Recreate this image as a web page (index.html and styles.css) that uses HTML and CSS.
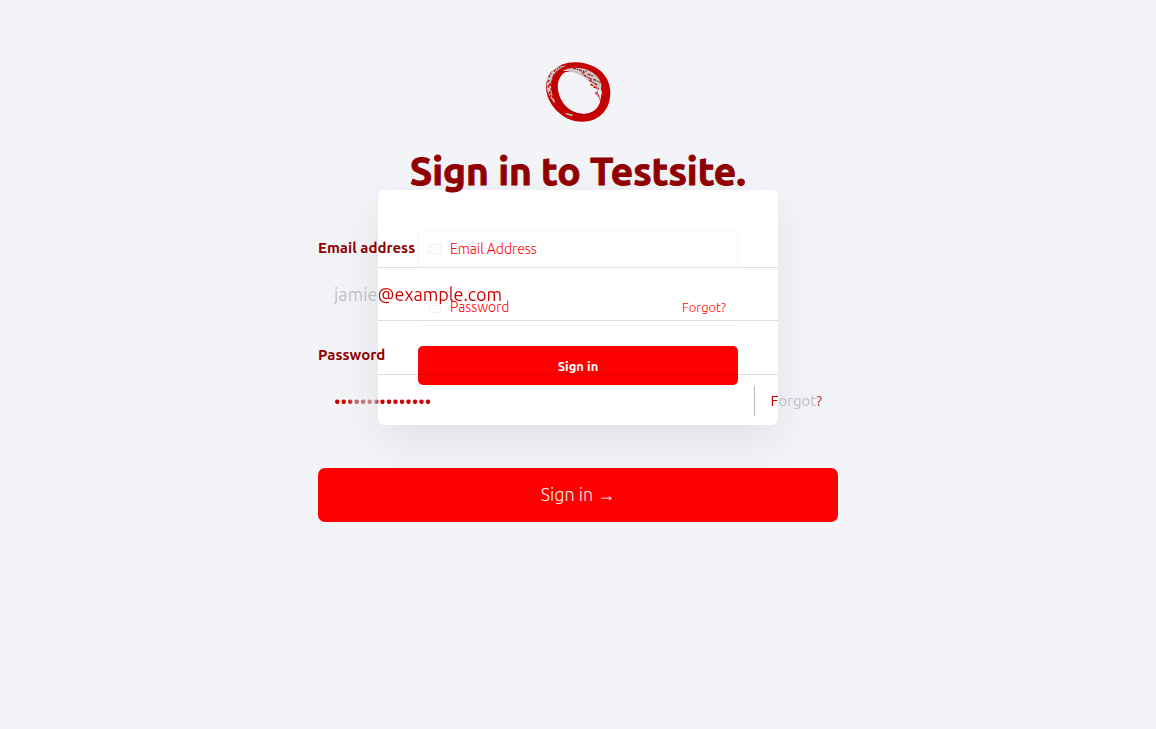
FILE: index.html
```html
<!DOCTYPE html>
<html lang="en">
<head>
<meta charset="utf-8">
<meta name="viewport" content="width=device-width, initial-scale=1">
<title>Sign in to Testsite.</title>
<link rel="stylesheet" href="styles.css">
</head>
<body>
<main class="stage">
  <form class="card">
    <div class="card-field">
      <svg class="card-icon" viewBox="0 0 14 12" aria-hidden="true"><path d="M.5 1.5h13v9H.5zM1 2l6 5 6-5M1 10l4-4M13 10L9 6"/></svg>
      <input class="card-input" type="email" placeholder="Email Address" aria-label="Email Address">
    </div>
    <div class="card-field card-field-secret">
      <svg class="card-icon" viewBox="0 0 14 12" aria-hidden="true"><path d="M1.5 4.500h11v7h-11zM4 4.500V1h6v3.500M5 7.500h4"/></svg>
      <input class="card-input" type="password" placeholder="Password" aria-label="Card password">
      <a class="card-forgot" href="#">Forgot?</a>
    </div>
    <button class="card-submit" type="button">Sign in</button>
  </form>

  <div class="panel">
    <svg class="logo" viewBox="24 24 196 180" role="img" aria-label="Testsite">
      <path class="ring" fill-rule="evenodd" d="M76 31C104 20 145 23 174 40C207 59 223 92 218 129C214 174 178 204 133 203C88 203 51 172 34 135C18 97 24 55 76 31ZM76 60C54 81 59 119 76 145C94 172 131 187 158 176C180 168 191 148 190 126C188 96 158 73 132 61C112 51 88 49 76 60Z"/>
      <path class="ash" d="M75 51C98 38 130 39 156 50C184 64 197 86 191 104L188 133C182 108 163 91 143 73C121 57 99 50 75 51Z"/>
      <path class="ash" d="M64 38C32 50 22 82 31 114C38 132 47 144 54 147C41 117 38 89 49 64C54 53 70 43 87 34Z"/>
      <path class="ash" d="M85 176L107 182L104 187L86 181Z"/>
      <path class="ash pale" d="M187 98L194 115L188 137L181 118Z"/>
      <path class="speck" d="M34 70L44 52M29 84L38 77M31 101L43 82M39 112L34 120M42 101L39 132M49 52L69 39M61 51L51 68M46 124L44 138M35 92L45 95"/>
      <path class="speck" d="M107 42L142 53M134 59L149 49M139 63L163 76M151 60L169 67M156 78L181 94M168 76L190 85M169 99L188 105M174 115L184 127M159 91L177 101"/>
      <path class="edge" d="M59 68C47 99 56 139 83 162C108 181 149 190 176 168M49 60C34 98 49 143 79 165M179 112L190 143"/>
    </svg>
    <h1 class="title">Sign in to Testsite.</h1>
    <form class="form">
      <div class="field">
        <label class="label" for="email">Email address</label>
        <div class="control control-email">
          <input class="input input-email" id="email" type="email" value="jamie@example.com">
        </div>
      </div>
      <div class="field">
        <label class="label" for="password">Password</label>
        <div class="control control-password">
          <input class="input input-password" id="password" type="password" value="fifteen-letters">
          <a class="forgot" href="#">Forgot?</a>
        </div>
      </div>
      <button class="submit" type="button">Sign in →</button>
    </form>
  </div>
</main>
</body>
</html>
```
FILE: styles.css
```css
* { box-sizing: border-box; }
body {
  margin: 0;
  min-height: 100vh;
  background: #f2f4f8;
  font-family: Ubuntu, "Noto Sans", sans-serif;
}
input, button { font: inherit; }
a { text-decoration: none; }

.stage {
  display: grid;
  justify-items: center;
  align-items: start;
}
.card, .panel { grid-area: 1 / 1; }

.card {
  display: flex;
  flex-direction: column;
  gap: 20px;
  width: 100%;
  max-width: 400px;
  margin-top: 190px;
  padding: 40px;
  background: #fff;
  border-radius: 6px;
  box-shadow: 0 16px 48px rgba(0, 0, 0, .08);
}
.card-field {
  display: flex;
  align-items: center;
  gap: 8px;
  height: 38px;
  padding: 0 11px 0 9px;
  border: 1px solid #f3f5f7;
  border-bottom-color: #dde5ed;
  border-radius: 5px;
}
.card-field-secret {
  border-color: transparent;
  border-bottom-color: #f0f3f6;
}
.card-icon {
  flex: none;
  width: 14px;
  height: 12px;
  fill: none;
  stroke: #f1f3f5;
}
.card-input {
  flex: 1;
  min-width: 0;
  padding: 0;
  border: 0;
  outline: 0;
  background: none;
  font-size: 14px;
  font-weight: 300;
  color: #f00;
}
.card-input::placeholder { color: #f00; opacity: 1; }
.card-forgot { font-size: 13px; font-weight: 300; color: #f00; }
.card-submit {
  height: 39px;
  border: 0;
  border-radius: 5px;
  background: #f00;
  color: #fff;
  font-size: 13px;
  font-weight: 700;
}

.panel {
  z-index: 1;
  display: flex;
  flex-direction: column;
  align-items: center;
  width: 100%;
  max-width: 520px;
  padding-top: 62px;
}
.logo { width: 66px; height: 60px; }
.ring { fill: #c40000; }
.ash { fill: #c8c8c8; }
.pale { fill: #eceef0; }
.speck {
  fill: none;
  stroke: #d00000;
  stroke-width: 4;
  stroke-dasharray: 9 3 4 3;
}
.edge { fill: none; stroke: #a80000; stroke-width: 2; }
.title {
  margin: 26px 0 43px;
  font-size: 39px;
  line-height: 46px;
  font-weight: 700;
  color: #900000;
  -webkit-text-stroke: 1px #900000;
  white-space: nowrap;
}
.form {
  display: flex;
  flex-direction: column;
  gap: 23px;
  width: 100%;
}
.field { display: flex; flex-direction: column; gap: 8px; }
.label {
  align-self: flex-start;
  font-size: 15px;
  line-height: 22px;
  font-weight: 700;
  color: #900000;
}
.control {
  display: flex;
  align-items: center;
  height: 54px;
  padding: 0 16px;
  background-repeat: no-repeat;
}
.control-email {
  background-image:
    linear-gradient(90deg, #dedede 40px, #dde5ed 40px, #dde5ed calc(100% - 40px), #dedede calc(100% - 40px)),
    linear-gradient(#dedede, #dedede);
  background-position: center top, center bottom;
  background-size: calc(100% - 120px) 1px;
}
.control-password {
  background-image: linear-gradient(rgba(0, 0, 0, .13), rgba(0, 0, 0, .13));
  background-position: center top;
  background-size: calc(100% - 120px) 1px;
}
.input {
  flex: 1;
  min-width: 0;
  height: 30px;
  padding: 0;
  border: 0;
  outline: 0;
  font-size: 18px;
  color: transparent;
  background: linear-gradient(90deg, #bbb 45px, #c80000 45px);
  -webkit-background-clip: text;
  background-clip: text;
}
.input-password {
  background-image: linear-gradient(90deg, #c80000 12px, #c06060 20px, #c09090 42px, #d00000 44px);
}
.forgot {
  padding-left: 16px;
  border-left: 1px solid #bbb;
  font-size: 15px;
  line-height: 30px;
  color: transparent;
  background: linear-gradient(90deg, #d00000 24px, #bbb 24px, #bbb calc(100% - 6px), #c83030 calc(100% - 6px));
  -webkit-background-clip: text;
  background-clip: text;
}
.submit {
  height: 54px;
  margin-top: 17px;
  border: 0;
  border-radius: 7px;
  background: #f00;
  color: #eee;
  font-size: 18px;
  font-weight: 300;
}
```
